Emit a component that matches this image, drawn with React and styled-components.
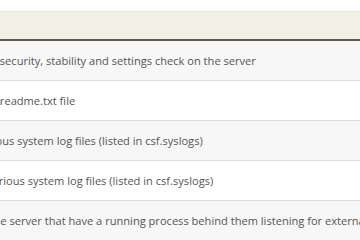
import React from "react";
import styled, { createGlobalStyle } from "styled-components";

const Global = createGlobalStyle`
  html, body {
    margin: 0;
    padding: 0;
    background: #ffffff;
    overflow: hidden;
  }
  body {
    width: 360px;
    height: 240px;
    font-family: "Open Sans", "DejaVu Sans", sans-serif;
  }
`;

const Page = styled.div`
  width: 360px;
  height: 240px;
  overflow: hidden;
  padding-top: 11px;
  box-sizing: border-box;
`;

const Table = styled.div`
  display: flex;
  flex-direction: column;
  width: 1000px;
  margin-left: -92px;
`;

const HeaderBand = styled.div`
  height: 27px;
  background: #f3f1e6;
  border-top: 1px solid #e3e3e3;
  border-bottom: 2px solid #565656;
`;

const Row = styled.div`
  display: flex;
  align-items: center;
  height: 39px;
  background: ${(p) => (p.$alt ? "#f7f7f7" : "#ffffff")};
  border-bottom: 1px solid #dddddd;
`;

const TextCell = styled.div`
  padding-left: 8px;
  font-size: 11.1px;
  color: #555555;
  white-space: nowrap;
`;

const rows = [
  "Perform a basic security, stability and settings check on the server",
  "View the csf+lfd readme.txt file",
  "Watch (tail) various system log files (listed in csf.syslogs)",
  "Search (grep) various system log files (listed in csf.syslogs)",
  "View ports on the server that have a running process behind them listening for external connections",
];

export default function App() {
  return (
    <>
      <Global />
      <Page>
        <Table>
          <HeaderBand />
          {rows.map((t, i) => (
            <Row key={i} $alt={i % 2 === 0}>
              <TextCell>{t}</TextCell>
            </Row>
          ))}
        </Table>
      </Page>
    </>
  );
}
